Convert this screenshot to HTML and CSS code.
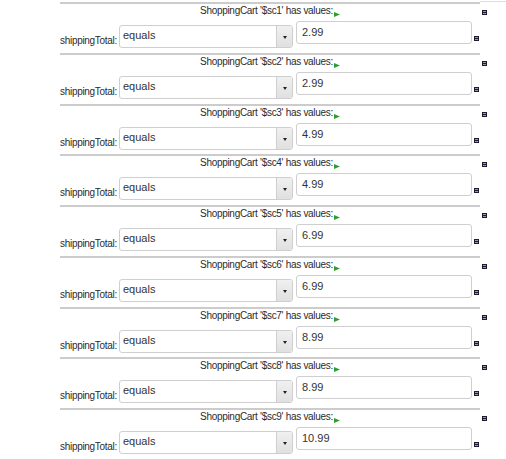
FILE: index.html
```html
<!DOCTYPE html>
<html>
<head>
<meta charset="utf-8">
<link rel="stylesheet" href="styles.css">
</head>
<body>
<div class="edge"></div>
<div class="list">
  <div class="row">
    <div class="head"><span class="title">ShoppingCart '$sc1' has values:<svg class="go" width="6" height="5" viewBox="0 0 6 5"><path d="M0 0L6 2.5L0 5Z" fill="#2f9e2f"/></svg></span><svg class="minus head-minus" width="5" height="5" viewBox="0 0 5 5"><rect x="0.5" y="0.5" width="4" height="4" fill="#9a9aa6" stroke="#1c1c30"/><rect x="1" y="2" width="3" height="1" fill="#1c1c30"/></svg></div>
    <div class="cond"><span class="label">shippingTotal:</span><div class="select"><span class="opt">equals</span><span class="btn"><i class="caret"></i></span></div><div class="input">2.99</div><svg class="minus" width="5" height="5" viewBox="0 0 5 5"><rect x="0.5" y="0.5" width="4" height="4" fill="#9a9aa6" stroke="#1c1c30"/><rect x="1" y="2" width="3" height="1" fill="#1c1c30"/></svg></div>
  </div>
  <div class="row">
    <div class="head"><span class="title">ShoppingCart '$sc2' has values:<svg class="go" width="6" height="5" viewBox="0 0 6 5"><path d="M0 0L6 2.5L0 5Z" fill="#2f9e2f"/></svg></span><svg class="minus head-minus" width="5" height="5" viewBox="0 0 5 5"><rect x="0.5" y="0.5" width="4" height="4" fill="#9a9aa6" stroke="#1c1c30"/><rect x="1" y="2" width="3" height="1" fill="#1c1c30"/></svg></div>
    <div class="cond"><span class="label">shippingTotal:</span><div class="select"><span class="opt">equals</span><span class="btn"><i class="caret"></i></span></div><div class="input">2.99</div><svg class="minus" width="5" height="5" viewBox="0 0 5 5"><rect x="0.5" y="0.5" width="4" height="4" fill="#9a9aa6" stroke="#1c1c30"/><rect x="1" y="2" width="3" height="1" fill="#1c1c30"/></svg></div>
  </div>
  <div class="row">
    <div class="head"><span class="title">ShoppingCart '$sc3' has values:<svg class="go" width="6" height="5" viewBox="0 0 6 5"><path d="M0 0L6 2.5L0 5Z" fill="#2f9e2f"/></svg></span><svg class="minus head-minus" width="5" height="5" viewBox="0 0 5 5"><rect x="0.5" y="0.5" width="4" height="4" fill="#9a9aa6" stroke="#1c1c30"/><rect x="1" y="2" width="3" height="1" fill="#1c1c30"/></svg></div>
    <div class="cond"><span class="label">shippingTotal:</span><div class="select"><span class="opt">equals</span><span class="btn"><i class="caret"></i></span></div><div class="input">4.99</div><svg class="minus" width="5" height="5" viewBox="0 0 5 5"><rect x="0.5" y="0.5" width="4" height="4" fill="#9a9aa6" stroke="#1c1c30"/><rect x="1" y="2" width="3" height="1" fill="#1c1c30"/></svg></div>
  </div>
  <div class="row">
    <div class="head"><span class="title">ShoppingCart '$sc4' has values:<svg class="go" width="6" height="5" viewBox="0 0 6 5"><path d="M0 0L6 2.5L0 5Z" fill="#2f9e2f"/></svg></span><svg class="minus head-minus" width="5" height="5" viewBox="0 0 5 5"><rect x="0.5" y="0.5" width="4" height="4" fill="#9a9aa6" stroke="#1c1c30"/><rect x="1" y="2" width="3" height="1" fill="#1c1c30"/></svg></div>
    <div class="cond"><span class="label">shippingTotal:</span><div class="select"><span class="opt">equals</span><span class="btn"><i class="caret"></i></span></div><div class="input">4.99</div><svg class="minus" width="5" height="5" viewBox="0 0 5 5"><rect x="0.5" y="0.5" width="4" height="4" fill="#9a9aa6" stroke="#1c1c30"/><rect x="1" y="2" width="3" height="1" fill="#1c1c30"/></svg></div>
  </div>
  <div class="row">
    <div class="head"><span class="title">ShoppingCart '$sc5' has values:<svg class="go" width="6" height="5" viewBox="0 0 6 5"><path d="M0 0L6 2.5L0 5Z" fill="#2f9e2f"/></svg></span><svg class="minus head-minus" width="5" height="5" viewBox="0 0 5 5"><rect x="0.5" y="0.5" width="4" height="4" fill="#9a9aa6" stroke="#1c1c30"/><rect x="1" y="2" width="3" height="1" fill="#1c1c30"/></svg></div>
    <div class="cond"><span class="label">shippingTotal:</span><div class="select"><span class="opt">equals</span><span class="btn"><i class="caret"></i></span></div><div class="input">6.99</div><svg class="minus" width="5" height="5" viewBox="0 0 5 5"><rect x="0.5" y="0.5" width="4" height="4" fill="#9a9aa6" stroke="#1c1c30"/><rect x="1" y="2" width="3" height="1" fill="#1c1c30"/></svg></div>
  </div>
  <div class="row">
    <div class="head"><span class="title">ShoppingCart '$sc6' has values:<svg class="go" width="6" height="5" viewBox="0 0 6 5"><path d="M0 0L6 2.5L0 5Z" fill="#2f9e2f"/></svg></span><svg class="minus head-minus" width="5" height="5" viewBox="0 0 5 5"><rect x="0.5" y="0.5" width="4" height="4" fill="#9a9aa6" stroke="#1c1c30"/><rect x="1" y="2" width="3" height="1" fill="#1c1c30"/></svg></div>
    <div class="cond"><span class="label">shippingTotal:</span><div class="select"><span class="opt">equals</span><span class="btn"><i class="caret"></i></span></div><div class="input">6.99</div><svg class="minus" width="5" height="5" viewBox="0 0 5 5"><rect x="0.5" y="0.5" width="4" height="4" fill="#9a9aa6" stroke="#1c1c30"/><rect x="1" y="2" width="3" height="1" fill="#1c1c30"/></svg></div>
  </div>
  <div class="row">
    <div class="head"><span class="title">ShoppingCart '$sc7' has values:<svg class="go" width="6" height="5" viewBox="0 0 6 5"><path d="M0 0L6 2.5L0 5Z" fill="#2f9e2f"/></svg></span><svg class="minus head-minus" width="5" height="5" viewBox="0 0 5 5"><rect x="0.5" y="0.5" width="4" height="4" fill="#9a9aa6" stroke="#1c1c30"/><rect x="1" y="2" width="3" height="1" fill="#1c1c30"/></svg></div>
    <div class="cond"><span class="label">shippingTotal:</span><div class="select"><span class="opt">equals</span><span class="btn"><i class="caret"></i></span></div><div class="input">8.99</div><svg class="minus" width="5" height="5" viewBox="0 0 5 5"><rect x="0.5" y="0.5" width="4" height="4" fill="#9a9aa6" stroke="#1c1c30"/><rect x="1" y="2" width="3" height="1" fill="#1c1c30"/></svg></div>
  </div>
  <div class="row">
    <div class="head"><span class="title">ShoppingCart '$sc8' has values:<svg class="go" width="6" height="5" viewBox="0 0 6 5"><path d="M0 0L6 2.5L0 5Z" fill="#2f9e2f"/></svg></span><svg class="minus head-minus" width="5" height="5" viewBox="0 0 5 5"><rect x="0.5" y="0.5" width="4" height="4" fill="#9a9aa6" stroke="#1c1c30"/><rect x="1" y="2" width="3" height="1" fill="#1c1c30"/></svg></div>
    <div class="cond"><span class="label">shippingTotal:</span><div class="select"><span class="opt">equals</span><span class="btn"><i class="caret"></i></span></div><div class="input">8.99</div><svg class="minus" width="5" height="5" viewBox="0 0 5 5"><rect x="0.5" y="0.5" width="4" height="4" fill="#9a9aa6" stroke="#1c1c30"/><rect x="1" y="2" width="3" height="1" fill="#1c1c30"/></svg></div>
  </div>
  <div class="row">
    <div class="head"><span class="title">ShoppingCart '$sc9' has values:<svg class="go" width="6" height="5" viewBox="0 0 6 5"><path d="M0 0L6 2.5L0 5Z" fill="#2f9e2f"/></svg></span><svg class="minus head-minus" width="5" height="5" viewBox="0 0 5 5"><rect x="0.5" y="0.5" width="4" height="4" fill="#9a9aa6" stroke="#1c1c30"/><rect x="1" y="2" width="3" height="1" fill="#1c1c30"/></svg></div>
    <div class="cond"><span class="label">shippingTotal:</span><div class="select"><span class="opt">equals</span><span class="btn"><i class="caret"></i></span></div><div class="input">10.99</div><svg class="minus" width="5" height="5" viewBox="0 0 5 5"><rect x="0.5" y="0.5" width="4" height="4" fill="#9a9aa6" stroke="#1c1c30"/><rect x="1" y="2" width="3" height="1" fill="#1c1c30"/></svg></div>
  </div>
</div>
</body>
</html>
```
FILE: styles.css
```css
html, body {
  margin: 0;
  padding: 0;
  background: #ffffff;
}
body {
  font-family: "Liberation Sans", Arial, sans-serif;
  color: #2b2b2b;
}
.edge {
  margin: 1px 0 0 480px;
  height: 1px;
  background: #dddddd;
}
.list {
  margin-left: 60px;
  width: 420px;
  display: flex;
  flex-direction: column;
}
.row {
  box-sizing: border-box;
  height: 50.75px;
  border-top: 2px solid #cccccc;
  display: flex;
  flex-direction: column;
}
.head {
  height: 14px;
  display: grid;
  grid-template-columns: 1fr auto 1fr;
  align-items: start;
}
.title {
  grid-column: 2;
  font-size: 10px;
  line-height: 14px;
  letter-spacing: -0.3px;
  white-space: nowrap;
  color: #2b2b2b;
}
.go {
  display: inline-block;
  vertical-align: -3px;
  margin-left: 1px;
}
.head-minus {
  grid-column: 3;
  justify-self: end;
  margin-right: -7px;
  margin-top: 6px;
}
.minus {
  display: block;
  flex: none;
}
.cond {
  display: flex;
  align-items: flex-start;
}
.label {
  width: 58px;
  margin-top: 17px;
  font-size: 10px;
  line-height: 12px;
  letter-spacing: -0.3px;
  white-space: nowrap;
  color: #2b2b2b;
}
.select {
  box-sizing: border-box;
  margin-left: 1px;
  margin-top: 7px;
  width: 174px;
  height: 23px;
  border: 1px solid #cfcfcf;
  border-radius: 3px;
  background: #ffffff;
  display: flex;
  overflow: hidden;
}
.opt {
  flex: 1;
  padding: 2px 0 0 3px;
  font-size: 11px;
  line-height: 14px;
  color: #333333;
}
.btn {
  width: 15px;
  border-left: 1px solid #cfcfcf;
  background: linear-gradient(#f0f0f0, #e0e0e0);
  display: flex;
  align-items: center;
  justify-content: center;
}
.caret {
  width: 0;
  height: 0;
  border-left: 2.5px solid transparent;
  border-right: 2.5px solid transparent;
  border-top: 3px solid #222222;
  margin-top: 2px;
}
.input {
  box-sizing: border-box;
  margin-left: 3px;
  margin-top: 3px;
  width: 176px;
  height: 23px;
  border: 1px solid #cfcfcf;
  border-radius: 3px;
  padding: 0 0 0 5px;
  font-size: 11px;
  line-height: 21px;
  color: #333333;
}
.cond .minus {
  margin-left: 2px;
  margin-top: 18px;
}
```
